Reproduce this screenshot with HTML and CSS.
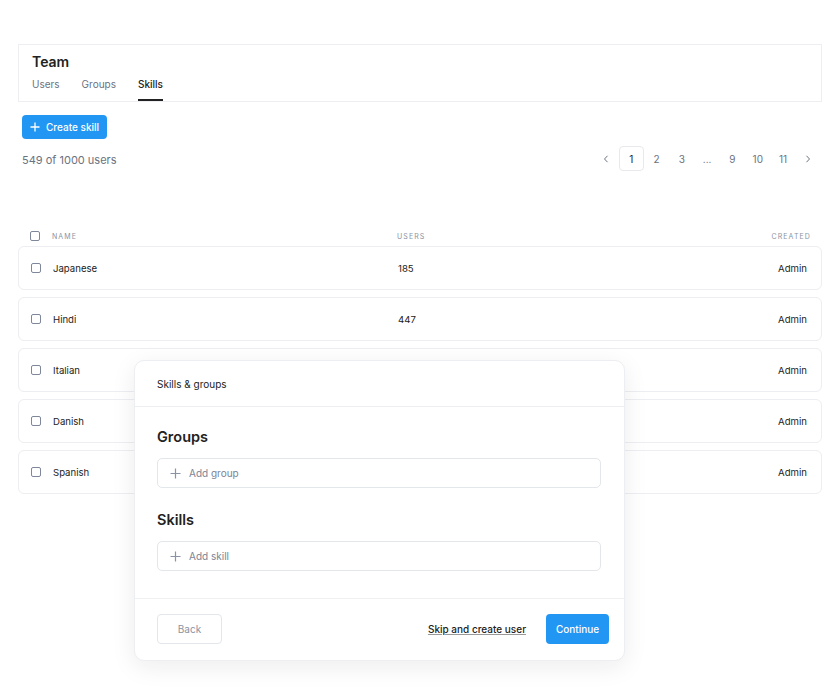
FILE: index.html
```html
<!DOCTYPE html>
<html lang="en">
<head>
    <meta charset="UTF-8">
    <title>Team - Skills</title>
    <link rel="stylesheet" href="styles.css">
</head>
<body>
    <div class="page">
        <div class="team-header">
            <h1 class="team-title">Team</h1>
            <nav class="tabs">
                <a class="tab">Users</a>
                <a class="tab">Groups</a>
                <a class="tab tab-active">Skills</a>
            </nav>
        </div>

        <button class="btn-primary create-btn">
            <svg width="10" height="10" viewBox="0 0 10 10"><path d="M5 0.5v9M0.5 5h9" stroke="#fff" stroke-width="1.3"/></svg>
            Create skill
        </button>

        <div class="toolbar">
            <span class="count">549 of 1000 users</span>
            <div class="pager">
                <span class="page-item"><svg width="6" height="8" viewBox="0 0 6 8"><path d="M4.5 0.8L1.5 4l3 3.2" fill="none" stroke="#6b7280" stroke-width="1"/></svg></span>
                <span class="page-item page-current">1</span>
                <span class="page-item">2</span>
                <span class="page-item">3</span>
                <span class="page-item">...</span>
                <span class="page-item">9</span>
                <span class="page-item">10</span>
                <span class="page-item">11</span>
                <span class="page-item"><svg width="6" height="8" viewBox="0 0 6 8"><path d="M1.5 0.8L4.5 4l-3 3.2" fill="none" stroke="#6b7280" stroke-width="1"/></svg></span>
            </div>
        </div>

        <div class="skills-table">
            <div class="table-head">
                <span class="checkbox"></span>
                <span>Name</span>
                <span>Users</span>
                <span class="col-right">Created</span>
            </div>
            <div class="table-row">
                <span class="checkbox"></span>
                <span>Japanese</span>
                <span>185</span>
                <span class="col-right">Admin</span>
            </div>
            <div class="table-row">
                <span class="checkbox"></span>
                <span>Hindi</span>
                <span>447</span>
                <span class="col-right">Admin</span>
            </div>
            <div class="table-row">
                <span class="checkbox"></span>
                <span>Italian</span>
                <span>92</span>
                <span class="col-right">Admin</span>
            </div>
            <div class="table-row">
                <span class="checkbox"></span>
                <span>Danish</span>
                <span>61</span>
                <span class="col-right">Admin</span>
            </div>
            <div class="table-row">
                <span class="checkbox"></span>
                <span>Spanish</span>
                <span>238</span>
                <span class="col-right">Admin</span>
            </div>
        </div>

        <!-- dialog floats over the table -->
        <div class="modal">
            <div class="modal-header">Skills &amp; groups</div>
            <div class="modal-body">
                <h2 class="section-title">Groups</h2>
                <div class="add-field">
                    <svg width="11" height="11" viewBox="0 0 11 11"><path d="M5.5 0.5v10M0.5 5.5h10" stroke="#8a93a3" stroke-width="1.2"/></svg>
                    Add group
                </div>
                <h2 class="section-title">Skills</h2>
                <div class="add-field">
                    <svg width="11" height="11" viewBox="0 0 11 11"><path d="M5.5 0.5v10M0.5 5.5h10" stroke="#8a93a3" stroke-width="1.2"/></svg>
                    Add skill
                </div>
            </div>
            <div class="modal-footer">
                <button class="btn-outline">Back</button>
                <a class="skip-link">Skip and create user</a>
                <button class="btn-primary continue-btn">Continue</button>
            </div>
        </div>
    </div>
</body>
</html>
```

FILE: styles.css
```css
body {
    margin: 0;
    background: #fff;
    font-family: Inter, Roboto, "Liberation Sans", sans-serif;
    color: #222;
}

.page {
    position: relative;
    padding: 44px 18px 0 18px;
    height: 656px;
}

/* header card with tabs */
.team-header {
    border: 1px solid #eceef1;
    padding: 8px 14px 0 13px;
}

.team-title {
    margin: 0;
    font-size: 14px;
    font-weight: 600;
    line-height: 18px;
    color: #222;
}

.tabs {
    display: flex;
    gap: 22px;
    margin-top: 5px;
}

.tab {
    font-size: 10px;
    line-height: 14px;
    color: #6b7280;
    padding: 1px 0 8px;
    border-bottom: 2px solid transparent;
}

.tab-active {
    color: #222;
    font-weight: 500;
    border-bottom-color: #222;
}

/* buttons */
.btn-primary {
    display: inline-flex;
    align-items: center;
    justify-content: center;
    gap: 6px;
    border: none;
    border-radius: 4px;
    background: #2196f3;
    color: #fff;
    font-family: inherit;
    font-size: 10px;
    font-weight: 500;
    cursor: pointer;
}

.create-btn {
    margin: 13px 0 0 4px;
    height: 24px;
    padding: 0 8px 0 8px;
}

.btn-outline {
    height: 30px;
    width: 65px;
    border: 1px solid #e3e6ea;
    border-radius: 4px;
    background: #fff;
    color: #8a93a3;
    font-family: inherit;
    font-size: 10px;
}

/* count + pagination */
.toolbar {
    display: flex;
    align-items: center;
    justify-content: space-between;
    margin-top: 7px;
    padding-left: 4px;
}

.count {
    font-size: 11px;
    color: #6b7280;
    padding-top: 3px;
}

.pager {
    display: flex;
    align-items: center;
    margin-right: 1px;
}

.page-item {
    display: flex;
    align-items: center;
    justify-content: center;
    width: 25.3px;
    height: 25px;
    font-size: 10px;
    color: #6b7280;
    box-sizing: border-box;
}

.page-current {
    border: 1px solid #e8e9ec;
    border-radius: 4px;
    color: #222;
}

/* skills table */
.skills-table {
    margin-top: 59px;
}

.table-head,
.table-row {
    display: grid;
    grid-template-columns: 11px 334px 1fr auto;
    column-gap: 11px;
    align-items: center;
}

.table-head {
    height: 12px;
    padding: 0 11px 4px 12px;
    font-size: 7px;
    letter-spacing: 1.1px;
    text-transform: uppercase;
    color: #8a93a3;
}

.table-row {
    height: 44px;
    box-sizing: border-box;
    padding: 0 14px 0 12px;
    margin-bottom: 7px;
    border: 1px solid #eceef1;
    border-radius: 6px;
    font-size: 9.6px;
    color: #222;
}

.col-right {
    text-align: right;
}

.checkbox {
    width: 8px;
    height: 8px;
    border: 1.5px solid #7e889a;
    border-radius: 2px;
}

/* dialog */
.modal {
    position: absolute;
    left: 134px;
    top: 360px;
    width: 491px;
    height: 301px;
    box-sizing: border-box;
    background: #fff;
    border: 1px solid #eceef1;
    border-radius: 10px;
    box-shadow: 0 6px 24px rgba(20, 30, 50, 0.08);
    display: flex;
    flex-direction: column;
}

.modal-header {
    height: 46px;
    box-sizing: border-box;
    display: flex;
    align-items: center;
    padding-left: 22px;
    border-bottom: 1px solid #eceef1;
    font-size: 10px;
    color: #222;
}

.modal-body {
    padding: 20px 23px 27px 22px;
    border-bottom: 1px solid #f0f1f3;
}

.section-title {
    margin: 0 0 11px;
    font-size: 14.5px;
    font-weight: 600;
    line-height: 20px;
    color: #222;
}

.add-field {
    display: flex;
    align-items: center;
    gap: 8px;
    height: 30px;
    box-sizing: border-box;
    padding-left: 12px;
    border: 1px solid #e3e6ea;
    border-radius: 5px;
    font-size: 10px;
    color: #7b8494;
    margin-bottom: 22px;
}

.add-field:last-child {
    margin-bottom: 0;
}

.modal-footer {
    display: flex;
    align-items: center;
    padding: 15px 15px 0 22px;
}

.skip-link {
    margin-left: auto;
    margin-right: 20px;
    font-size: 10px;
    font-weight: 500;
    color: #222;
    text-decoration: underline;
    text-decoration-color: #999;
}

.continue-btn {
    height: 30px;
    width: 63px;
    font-size: 10px;
}
```
